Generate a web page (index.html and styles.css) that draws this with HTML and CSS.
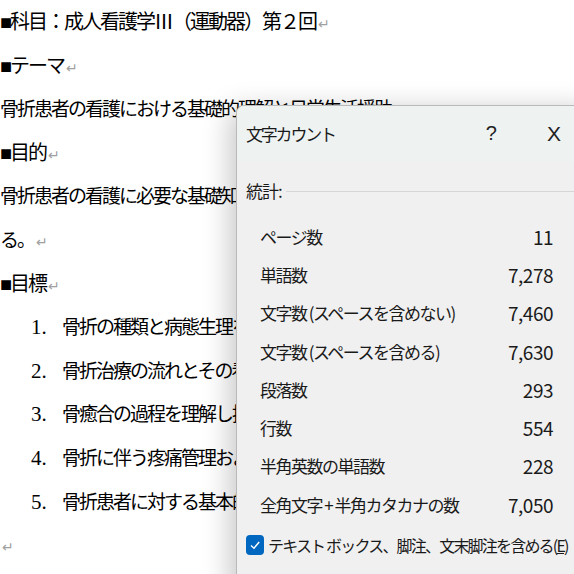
FILE: index.html
```html
<!DOCTYPE html>
<html lang="ja">
<head>
  <meta charset="UTF-8" />
  <title>文字カウント</title>
  <link rel="stylesheet" href="styles.css">
</head>
<body>
  <div class="doc">
    <p class="line head">■科目：成人看護学Ⅲ（運動器）第２回<span class="mark">↵</span></p>
    <p class="line head">■テーマ<span class="mark">↵</span></p>
    <p class="line">骨折患者の看護における基礎的理解と日常生活援助<span class="mark">↵</span></p>
    <p class="line head">■目的<span class="mark">↵</span></p>
    <p class="line">骨折患者の看護に必要な基礎知識と技術を習得し、安全な援助を</p>
    <p class="line">る。<span class="mark">↵</span></p>
    <p class="line head">■目標<span class="mark">↵</span></p>
    <ol class="goals">
      <li class="line"><span class="num">1.</span>骨折の種類と病態生理を説明できる</li>
      <li class="line"><span class="num">2.</span>骨折治療の流れとその看護を理解する</li>
      <li class="line"><span class="num">3.</span>骨癒合の過程を理解し援助を考える</li>
      <li class="line"><span class="num">4.</span>骨折に伴う疼痛管理および合併症予防</li>
      <li class="line"><span class="num">5.</span>骨折患者に対する基本的な援助技術</li>
    </ol>
    <p class="line"><span class="mark">↵</span></p>
  </div>

  <div class="dialog">
    <div class="dialog-title">
      <span class="title-text">文字カウント</span>
      <span class="title-btn help">?</span>
      <span class="title-btn close">X</span>
    </div>
    <div class="dialog-body">
      <div class="group-label">
        <span>統計:</span>
        <span class="rule"></span>
      </div>
      <table class="stats">
        <tr><td>ページ数</td><td class="val">11</td></tr>
        <tr><td>単語数</td><td class="val">7,278</td></tr>
        <tr><td>文字数 (スペースを含めない)</td><td class="val">7,460</td></tr>
        <tr><td>文字数 (スペースを含める)</td><td class="val">7,630</td></tr>
        <tr><td>段落数</td><td class="val">293</td></tr>
        <tr><td>行数</td><td class="val">554</td></tr>
        <tr><td>半角英数の単語数</td><td class="val">228</td></tr>
        <tr><td>全角文字 + 半角カタカナの数</td><td class="val">7,050</td></tr>
      </table>
      <label class="check-row">
        <span class="checkbox">
          <svg width="12" height="12" viewBox="0 0 12 12"><path d="M2 6.5 L5 9.2 L10.2 3" fill="none" stroke="#fff" stroke-width="1.4"/></svg>
        </span>
        <span>テキスト ボックス、脚注、文末脚注を含める(<u>E</u>)</span>
      </label>
    </div>
  </div>
</body>
</html>
```

FILE: styles.css
```css
body {
  margin: 0;
  background: #ffffff;
  overflow: hidden;
  width: 574px;
  height: 574px;
  position: relative;
}

.doc {
  font-family: "Liberation Serif", "Noto Sans CJK JP", serif;
  font-size: 19px;
  letter-spacing: -2px;
  color: #000;
  white-space: nowrap;
}

.line {
  margin: 0;
  height: 43.6px;
  line-height: 45px;
}

.head {
  font-size: 20px;
}

.mark {
  color: #a0a0a0;
  font-size: 14px;
  margin-left: 2px;
}

.goals {
  list-style: none;
  margin: 0;
  padding: 0 0 0 31px;
}

.num {
  display: inline-block;
  width: 31px;
  font-size: 21px;
  letter-spacing: 0;
}

/* floating dialog over the document */
.dialog {
  position: absolute;
  left: 236px;
  top: 105px;
  width: 360px;
  height: 500px;
  background: #f0f0f0;
  border: 1px solid #b9b9b9;
  border-radius: 8px 0 0 0;
  box-shadow: -6px 4px 28px rgba(0, 0, 0, 0.22);
  font-family: "Noto Sans CJK JP", "Noto Sans", sans-serif;
  color: #1a1a1a;
  overflow: hidden;
}

.dialog-title {
  display: flex;
  align-items: center;
  height: 55px;
  background: #eef3f2;
  padding-left: 9px;
  font-size: 16px;
}

.title-text {
  flex: 1;
  font-size: 17px;
  letter-spacing: -2.2px;
}

.title-btn {
  font-size: 20px;
  font-family: "Liberation Sans", sans-serif;
  color: #222;
}

.help {
  margin-right: 50px;
}

.close {
  font-size: 21px;
  margin-right: 36px;
}

.dialog-body {
  padding: 14px 0 0 9px;
  font-size: 17px;
}

.group-label {
  display: flex;
  align-items: center;
  gap: 4px;
  height: 30px;
  letter-spacing: -1px;
}

.group-label .rule {
  flex: 1;
  border-top: 1px solid #d6d6d6;
  margin-top: 2px;
}

.stats {
  border-collapse: collapse;
  width: 293px;
  margin: 12px 0 0 14px;
}

.stats td {
  height: 38.3px;
  padding: 0;
  letter-spacing: -1.5px;
}

.stats .val {
  text-align: right;
  font-size: 19px;
  letter-spacing: -0.5px;
}

.check-row {
  display: flex;
  align-items: center;
  gap: 4px;
  margin-top: 10px;
  font-size: 16px;
  letter-spacing: -1.8px;
  white-space: nowrap;
}

.checkbox {
  display: inline-flex;
  align-items: center;
  justify-content: center;
  width: 18px;
  height: 20px;
  background: #0067c0;
  border-radius: 4px;
}
```
